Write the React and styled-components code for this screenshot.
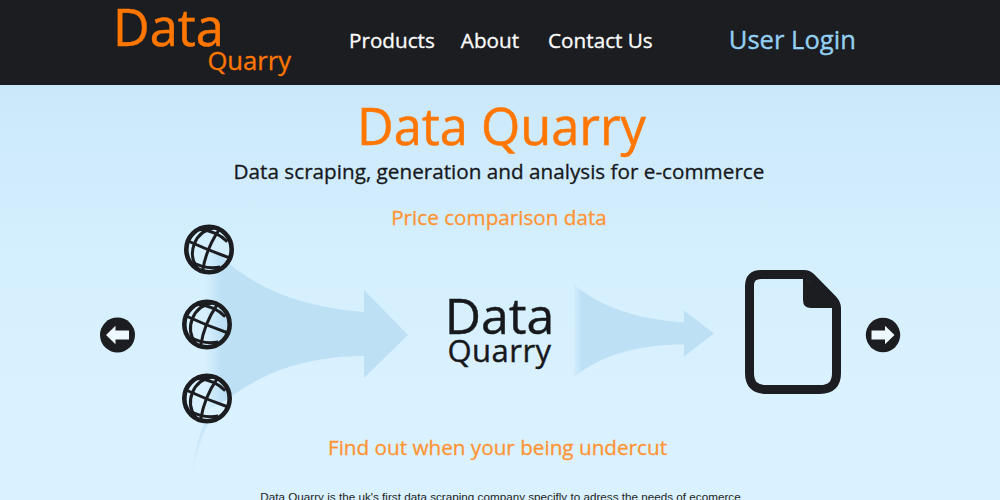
import React from "react";
import styled, { createGlobalStyle } from "styled-components";

const Global = createGlobalStyle`
  html, body { margin: 0; padding: 0; }
  body { width: 1000px; height: 500px; overflow: hidden; background: #daf1ff; font-family: "Open Sans", "Noto Sans", sans-serif; }
`;
const Page = styled.div`
  width: 1000px; height: 500px; overflow: hidden; display: flex; flex-direction: column;
`;
const Header = styled.header`
  flex: none; height: 85px; background: #1c1d20; display: flex; align-items: flex-start;
`;
const Logo = styled.div`
  width: 178px; margin-left: 113px; color: #ff7600; display: flex; flex-direction: column; -webkit-text-stroke: .5px #ff7600;
`;
const LogoMain = styled.span`
  font-size: 50.5px; line-height: 54px;
`;
const LogoSub = styled.span`
  font-size: 25.6px; line-height: 28px; margin-top: -7px; align-self: flex-end; white-space: nowrap; -webkit-text-stroke: .3px #ff7600;
`;
const Nav = styled.nav`
  display: flex; margin-left: 58px; margin-top: 26px; gap: 26px;
`;
const NavLink = styled.a`
  color: #fbfbfb; font-size: 20.7px; line-height: 28px; white-space: nowrap; -webkit-text-stroke: .35px #fbfbfb;
  margin-right: ${p => p.$after || 0}px;
`;
const Login = styled.a`
  color: #93d0f2; font-size: 25.6px; line-height: 28px; margin-left: 50px; white-space: nowrap; -webkit-text-stroke: .35px #93d0f2;
`;
const Main = styled.main`
  flex: 1; display: flex; flex-direction: column; align-items: center;
  background: linear-gradient(#cbe8fa 0, #d4effe 170px, #daf1ff 300px);
  color: #16181c; min-height: 0;
`;
const Title = styled.h1`
  margin: 7px 0 0 3px; color: #ff7600; font-size: 50.5px; line-height: 68px; font-weight: 400; white-space: nowrap; -webkit-text-stroke: .5px #ff7600;
`;
const Tagline = styled.p`
  margin: -3px 0 0 -2px; font-size: 20.7px; line-height: 28px; white-space: nowrap; -webkit-text-stroke: .3px #16181c;
`;
const SlideCaption = styled.h2`
  margin: ${p => p.$top}px 0 0 ${p => p.$left}px; color: #ff9433; font-size: 20.7px; line-height: 28px; font-weight: 400; white-space: nowrap; -webkit-text-stroke: .3px #ff9433;
`;
const Slide = styled.section`
  width: 800px; height: 180px; flex: none; margin-top: 14px; display: flex; align-items: center;
`;
const RoundArrow = styled.svg`
  flex: none; width: 36px; height: 36px; margin-left: ${p => p.$left || 0}px;
`;
const Globes = styled.div`
  flex: none; width: 52px; margin-left: 45px; display: flex; flex-direction: column; align-items: flex-start; gap: 23.5px;
  position: relative; z-index: 1; top: -11px;
`;
const Globe = styled.svg`
  width: 52px; height: 51px; display: block; margin-left: ${p => p.$shift || 0}px;
`;
const BigArrow = styled.svg`
  flex: none; width: 220px; height: 290px; margin-left: -43px;
`;
const Brand = styled.div`
  flex: none; width: 110px; margin-left: 34.5px; display: flex; flex-direction: column; align-items: center; color: #16181c;
  position: relative; top: -8px; -webkit-text-stroke: .4px #16181c;
`;
const BrandMain = styled.span`
  font-size: 50px; line-height: 50px;
`;
const BrandSub = styled.span`
  font-size: 31px; line-height: 30px; margin-top: -5px; letter-spacing: .5px;
`;
const SmallArrow = styled.svg`
  flex: none; width: 150px; height: 100px; margin-left: 15px; position: relative; top: -1px;
`;
const DocIcon = styled.svg`
  flex: none; width: 100px; height: 128px; margin-left: 23.5px; position: relative; top: -3px;
`;
const Intro = styled.p`
  margin: 28px 0 0 1px; font-family: "Liberation Sans", Arial, sans-serif; font-size: 11.7px; line-height: 16px; color: #1d1f22; white-space: nowrap;
`;

const GlobeMark = ({ shift }) => (
  <Globe viewBox="0 0 52 51" $shift={shift}>
    <g fill="none" stroke="#1c1d20" transform="translate(26 25.5)">
      <circle r="22.7" strokeWidth="4.6" />
      <g transform="rotate(22)" strokeWidth="3">
        <path d="M-3-22C-20-12-20 12-3 22" />
        <path d="M-22 0Q0 1 22 0" />
        <path d="M2-22Q-3 0 2 22" />
        <path d="M-16-15Q0-20 14-14" />
        <path d="M-10 18Q4 20 17 12" />
      </g>
    </g>
  </Globe>
);

export default function App() {
  return (
    <Page>
      <Global />
      <Header>
        <Logo>
          <LogoMain>Data</LogoMain>
          <LogoSub>Quarry</LogoSub>
        </Logo>
        <Nav>
          <NavLink>Products</NavLink>
          <NavLink $after={3}>About</NavLink>
          <NavLink>Contact Us</NavLink>
          <Login>User Login</Login>
        </Nav>
      </Header>
      <Main>
        <Title>Data Quarry</Title>
        <Tagline>Data scraping, generation and analysis for e-commerce</Tagline>
        <SlideCaption $top={18} $left={-2}>Price comparison data</SlideCaption>
        <Slide>
          <RoundArrow viewBox="0 0 36 36">
            <circle cx="17.5" cy="18" r="17.5" fill="#1c1d20" />
            <path d="M6 18 15.5 8.8V13.5H29V22.5H15.5V27.2Z" fill="#eef8ff" />
          </RoundArrow>
          <Globes>
            <GlobeMark shift={1.5} />
            <GlobeMark />
            <GlobeMark />
          </Globes>
          <BigArrow viewBox="190 190 220 290">
            <defs>
              <linearGradient id="fadeBig" gradientUnits="userSpaceOnUse" x1="205" x2="222" y1="0" y2="0">
                <stop offset="0" stopColor="#bde0f5" stopOpacity="0" />
                <stop offset="1" stopColor="#bde0f5" />
              </linearGradient>
              <linearGradient id="fadeSliver" gradientUnits="userSpaceOnUse" x1="0" x2="0" y1="425" y2="480">
                <stop offset="0" stopColor="#bde0f5" stopOpacity=".7" />
                <stop offset="1" stopColor="#bde0f5" stopOpacity="0" />
              </linearGradient>
            </defs>
            <path d="M205 245Q222 255 232 266C270 296 315 308 364 312V290L408 335 364 378V356C315 356 270 368 232 396Q220 405 205 410Z" fill="url(#fadeBig)" />
            <path d="M208 424C200 440 195 458 192 478C193 460 197 440 204 424Z" fill="url(#fadeSliver)" />
          </BigArrow>
          <Brand>
            <BrandMain>Data</BrandMain>
            <BrandSub>Quarry</BrandSub>
          </Brand>
          <SmallArrow viewBox="570 284.5 150 100">
            <defs>
              <linearGradient id="fadeSmall" gradientUnits="userSpaceOnUse" x1="572" x2="582" y1="0" y2="0">
                <stop offset="0" stopColor="#bde0f5" stopOpacity="0" />
                <stop offset="1" stopColor="#bde0f5" />
              </linearGradient>
            </defs>
            <path d="M574 285C600 308 640 320 684 323V311L714 334 684 357V345C640 345 600 355 574 378Z" fill="url(#fadeSmall)" />
          </SmallArrow>
          <DocIcon viewBox="743 268 100 128">
            <path d="M761 274.5H804Q808 274.5 811 277.5L833 300Q836.5 304 836.5 308V373Q836.5 389.5 820 389.5H766Q749.5 389.5 749.5 373V286Q749.5 274.5 761 274.5Z" fill="none" stroke="#1c1d20" strokeWidth="9" strokeLinejoin="round" />
            <path d="M803 276L838 308H811Q803 308 803 300Z" fill="#1c1d20" />
          </DocIcon>
          <RoundArrow viewBox="0 0 36 36" $left={22}>
            <circle cx="18" cy="18" r="17.2" fill="#1c1d20" />
            <path d="M29.5 18 20 8.8V13.5H6.5V22.5H20V27.2Z" fill="#eef8ff" />
          </RoundArrow>
        </Slide>
        <SlideCaption $top={8} $left={-5}>Find out when your being undercut</SlideCaption>
        <Intro>Data Quarry is the uk's first data scraping company specifly to adress the needs of ecomerce</Intro>
      </Main>
    </Page>
  );
}
